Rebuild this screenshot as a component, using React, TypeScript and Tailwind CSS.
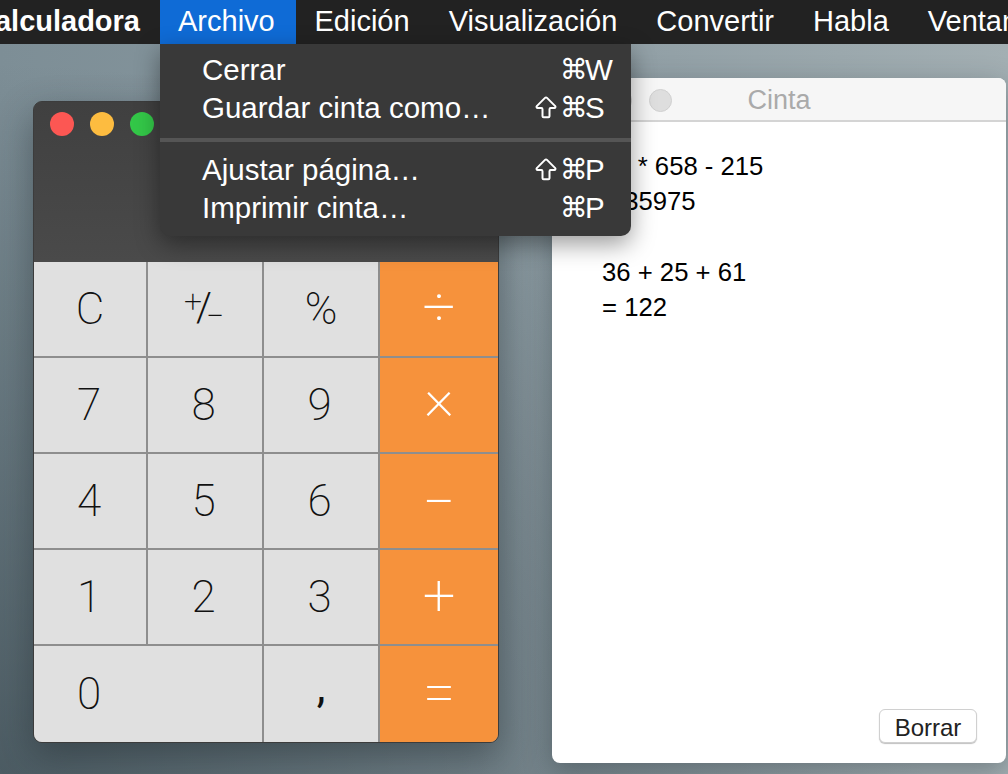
import { ReactNode } from "react"
import { ArrowBigUp } from "lucide-react"

const SANS = "font-['Liberation_Sans',Arial,sans-serif]"
const LIGHT = "font-['Roboto',sans-serif] font-extralight"

const menuBar = ["Edición", "Visualización", "Convertir", "Habla", "Ventana"]

function MenuRow({ label, shift, keyName }: { label: string; shift?: boolean; keyName: string }) {
  return (
    <div className="grid h-[38px] grid-cols-[330px_28px_25px_auto] items-center pl-[42px] leading-none">
      <span>{label}</span>
      <span className="flex">{shift && <ArrowBigUp size={30} strokeWidth={1.7} />}</span>
      <span className="font-['DejaVu_Sans',sans-serif] text-[28px]">⌘</span>
      <span>{keyName}</span>
    </div>
  )
}

function Key({ children, className = "" }: { children: ReactNode; className?: string }) {
  return (
    <div className={`flex items-center justify-center bg-[#e0e0e0] text-[44px] text-[#111] ${className}`}>
      {children}
    </div>
  )
}

function Op({ children, className = "" }: { children: ReactNode; className?: string }) {
  return (
    <div className="flex items-center justify-center bg-[#f6923c] text-[58px] text-white">
      <span className={className}>{children}</span>
    </div>
  )
}

function Dot({ className }: { className: string }) {
  return <span className={`block size-6 rounded-full ${className}`} />
}

export default function App() {
  return (
    <div
      className={`relative h-[774px] w-[1008px] overflow-hidden bg-[radial-gradient(ellipse_at_0%_100%,rgba(50,65,72,0.65)_0%,rgba(50,65,72,0)_65%),linear-gradient(90deg,#7d8e96_0%,#8b9aa1_50%,#a3afb3_100%)] ${SANS}`}
    >
      {/* Menu bar */}
      <div className="flex h-11 items-center overflow-hidden whitespace-nowrap bg-[#222222] text-[29px] text-white">
        <span className="ml-[-26px] w-[186px] shrink-0 font-bold">Calculadora</span>
        <span className="mr-[-1px] flex h-full w-[136px] shrink-0 items-center bg-[#0f6bd6] pl-[18px]">Archivo</span>
        {menuBar.map((item) => (
          <span key={item} className="shrink-0 px-[19.5px]">
            {item}
          </span>
        ))}
      </div>

      {/* Calculadora */}
      <div className="absolute left-[33px] top-[101px] h-[642px] w-[466px] overflow-hidden rounded-[9px] border border-[#3c3c3c] bg-[#4a4a4a] shadow-[0_14px_36px_rgba(30,40,45,0.45)]">
        <div className="flex h-[160px] gap-4 bg-gradient-to-b from-[#404040] to-[#4a4a4a] pl-4 pt-[10px]">
          <Dot className="bg-[#fc5753]" />
          <Dot className="bg-[#fdbc40]" />
          <Dot className="bg-[#33c748]" />
        </div>
        <div className={`grid grid-cols-[112px_114px_114px_118px] grid-rows-[94px_94px_94px_94px_96px] gap-[2px] bg-[#8e8e8e] ${LIGHT}`}>
          <Key className="bg-[#d6d6d6]">C</Key>
          <Key className="bg-[#d6d6d6] pr-[2px]">
            <span className="flex items-center">
              <span className="-translate-y-[8px] text-[32px]">+</span>
              <span className="-mx-[6px] -translate-y-[1px] text-[40px] font-light">/</span>
              <span className="translate-y-[7px] text-[32px]">−</span>
            </span>
          </Key>
          <Key className="bg-[#d6d6d6] text-[40px]">%</Key>
          <Op className="-translate-y-[2px]">÷</Op>
          <Key className="pr-[2px]">7</Key>
          <Key className="pr-[3px]">8</Key>
          <Key className="pr-[3px]">9</Key>
          <Op className="-translate-y-[8px]">×</Op>
          <Key className="pr-[2px]">4</Key>
          <Key className="pr-[3px]">5</Key>
          <Key className="pr-[3px]">6</Key>
          <Op className="translate-y-[1px]">−</Op>
          <Key className="pr-[2px]">1</Key>
          <Key className="pr-[3px]">2</Key>
          <Key className="pr-[3px]">3</Key>
          <Op className="-translate-y-[2px]">+</Op>
          <Key className="col-span-2 pr-[118px]">0</Key>
          <Key>
            <span className="-translate-y-[7px] font-normal">,</span>
          </Key>
          <Op className="-translate-y-[2px]">=</Op>
        </div>
      </div>

      {/* Cinta */}
      <div className="absolute left-[552px] top-[78px] flex h-[685px] w-[454px] flex-col overflow-hidden rounded-[8px] bg-white shadow-[0_8px_28px_rgba(30,40,45,0.35)]">
        <div className="relative flex h-11 shrink-0 items-center gap-[17px] border-b-2 border-[#d4d4d4] bg-[#f6f6f6] pl-[17px] pt-[2px]">
          <span className="size-[23px] rounded-full border border-[#d0d0d0] bg-[#dedede]" />
          <span className="size-[23px] rounded-full border border-[#d0d0d0] bg-[#dedede]" />
          <span className="size-[23px] rounded-full border border-[#d0d0d0] bg-[#dedede]" />
          <span className="absolute inset-x-0 text-center text-[27px] text-[#aaaaaa]">Cinta</span>
        </div>
        <div className="flex-1 pl-[50px] pt-[27px] text-[25.7px] leading-[35.3px] text-black">
          <p>55 * 658 - 215</p>
          <p>= 35975</p>
          <p className="h-[35.3px]" />
          <p>36 + 25 + 61</p>
          <p>= 122</p>
        </div>
        <div className="flex justify-end pb-5 pr-[29px]">
          <button className="h-[34px] w-[98px] rounded-[6px] border border-[#d0d0d0] bg-white pb-[2px] text-[24px] text-[#222] shadow-[0_1px_1px_rgba(0,0,0,0.25)]">
            Borrar
          </button>
        </div>
      </div>

      {/* Menu Archivo */}
      <div className="absolute left-[160px] top-[44px] w-[471px] rounded-b-[10px] bg-[#393939] pb-[9px] pt-[7px] text-[29.5px] text-white shadow-[0_8px_24px_rgba(0,0,0,0.4)]">
        <MenuRow label="Cerrar" keyName="W" />
        <MenuRow label="Guardar cinta como…" shift keyName="S" />
        <div className="mb-[9px] mt-[11px] h-1 bg-[#555555]" />
        <MenuRow label="Ajustar página…" shift keyName="P" />
        <MenuRow label="Imprimir cinta…" keyName="P" />
      </div>
    </div>
  )
}
